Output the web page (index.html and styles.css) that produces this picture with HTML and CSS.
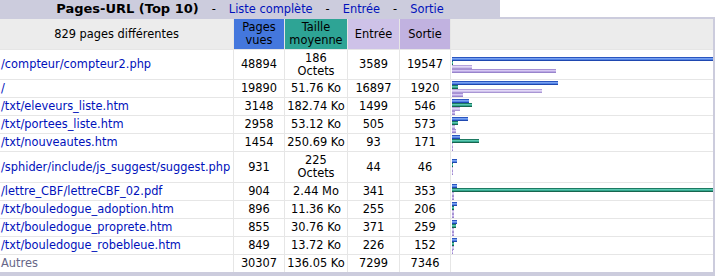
FILE: index.html
```html
<!DOCTYPE html>
<html lang="fr">
<head>
<meta charset="utf-8">
<title>Pages-URL (Top 10)</title>
<link rel="stylesheet" href="styles.css">
</head>
<body>
<div class="report">
  <div class="titlebar">
    <div class="title"><b>Pages-URL (Top 10)</b><span class="sep">-</span><a href="#">Liste complète</a><span class="sep">-</span><a href="#">Entrée</a><span class="sep">-</span><a href="#">Sortie</a></div>
    <div class="blank"></div>
  </div>
  <div class="frame">
    <div class="grid">
      <div class="h h-first">829 pages différentes</div>
      <div class="h h-p">Pages<br>vues</div>
      <div class="h h-k">Taille<br>moyenne</div>
      <div class="h h-e">Entrée</div>
      <div class="h h-x">Sortie</div>
      <div class="h h-bar"></div>

      <div class="c url"><a href="#">/compteur/compteur2.php</a></div>
      <div class="c">48894</div><div class="c">186<br>Octets</div><div class="c">3589</div><div class="c">19547</div>
      <div class="c bars"><span class="bar bp" style="width:261px"></span><span class="bar bk" style="width:1px"></span><span class="bar be" style="width:20px"></span><span class="bar bx" style="width:104px"></span></div>

      <div class="c url"><a href="#">/</a></div>
      <div class="c">19890</div><div class="c">51.76 Ko</div><div class="c">16897</div><div class="c">1920</div>
      <div class="c bars"><span class="bar bp" style="width:106px"></span><span class="bar bk" style="width:6px"></span><span class="bar be" style="width:90px"></span><span class="bar bx" style="width:11px"></span></div>

      <div class="c url"><a href="#">/txt/eleveurs_liste.htm</a></div>
      <div class="c">3148</div><div class="c">182.74 Ko</div><div class="c">1499</div><div class="c">546</div>
      <div class="c bars"><span class="bar bp" style="width:17px"></span><span class="bar bk" style="width:20px"></span><span class="bar be" style="width:8px"></span><span class="bar bx" style="width:3px"></span></div>

      <div class="c url"><a href="#">/txt/portees_liste.htm</a></div>
      <div class="c">2958</div><div class="c">53.12 Ko</div><div class="c">505</div><div class="c">573</div>
      <div class="c bars"><span class="bar bp" style="width:16px"></span><span class="bar bk" style="width:6px"></span><span class="bar be" style="width:3px"></span><span class="bar bx" style="width:4px"></span></div>

      <div class="c url"><a href="#">/txt/nouveautes.htm</a></div>
      <div class="c">1454</div><div class="c">250.69 Ko</div><div class="c">93</div><div class="c">171</div>
      <div class="c bars"><span class="bar bp" style="width:8px"></span><span class="bar bk" style="width:27px"></span><span class="bar be" style="width:1px"></span><span class="bar bx" style="width:1px"></span></div>

      <div class="c url"><a href="#">/sphider/include/js_suggest/suggest.php</a></div>
      <div class="c">931</div><div class="c">225<br>Octets</div><div class="c">44</div><div class="c">46</div>
      <div class="c bars"><span class="bar bp" style="width:5px"></span><span class="bar bk" style="width:1px"></span><span class="bar be" style="width:1px"></span><span class="bar bx" style="width:1px"></span></div>

      <div class="c url"><a href="#">/lettre_CBF/lettreCBF_02.pdf</a></div>
      <div class="c">904</div><div class="c">2.44 Mo</div><div class="c">341</div><div class="c">353</div>
      <div class="c bars"><span class="bar bp" style="width:5px"></span><span class="bar bk" style="width:261px"></span><span class="bar be" style="width:2px"></span><span class="bar bx" style="width:2px"></span></div>

      <div class="c url"><a href="#">/txt/bouledogue_adoption.htm</a></div>
      <div class="c">896</div><div class="c">11.36 Ko</div><div class="c">255</div><div class="c">206</div>
      <div class="c bars"><span class="bar bp" style="width:5px"></span><span class="bar bk" style="width:2px"></span><span class="bar be" style="width:2px"></span><span class="bar bx" style="width:2px"></span></div>

      <div class="c url"><a href="#">/txt/bouledogue_proprete.htm</a></div>
      <div class="c">855</div><div class="c">30.76 Ko</div><div class="c">371</div><div class="c">259</div>
      <div class="c bars"><span class="bar bp" style="width:5px"></span><span class="bar bk" style="width:4px"></span><span class="bar be" style="width:2px"></span><span class="bar bx" style="width:2px"></span></div>

      <div class="c url"><a href="#">/txt/bouledogue_robebleue.htm</a></div>
      <div class="c">849</div><div class="c">13.72 Ko</div><div class="c">226</div><div class="c">152</div>
      <div class="c bars"><span class="bar bp" style="width:5px"></span><span class="bar bk" style="width:2px"></span><span class="bar be" style="width:2px"></span><span class="bar bx" style="width:1px"></span></div>

      <div class="c url other">Autres</div>
      <div class="c">30307</div><div class="c">136.05 Ko</div><div class="c">7299</div><div class="c">7346</div>
      <div class="c bars"></div>
    </div>
  </div>
</div>
</body>
</html>
```

FILE: styles.css
```css
html, body {
  margin: 0;
  padding: 0;
  background: #ffffff;
}

body {
  font-family: "DejaVu Sans", Verdana, sans-serif;
  font-size: 11.4px;
  color: #000000;
}

a {
  color: #0011bb;
  text-decoration: none;
}

.report {
  width: 715px;
}

.titlebar {
  display: flex;
  height: 17px;
}

.title {
  width: 500px;
  background: #ccccdd;
  display: flex;
  align-items: center;
  justify-content: center;
  font-size: 11.4px;
  white-space: nowrap;
}

.title b {
  font-size: 13px;
  font-weight: bold;
}

.title .sep {
  color: #000000;
  padding: 0 13px;
}

.blank {
  flex: 1;
  background: #ffffff;
}

.frame {
  background: #ccccdd;
  padding: 2px 2px 4px 0;
}

.grid {
  display: grid;
  grid-template-columns: 233px 50px 62px 51px 50px 262px;
  grid-template-rows: 30px 29px 17px 17px 17px 17px 30px 17px 17px 17px 17px 17px;
  gap: 1px;
  background: #e6e6e6;
}

.h {
  display: flex;
  align-items: center;
  justify-content: center;
  text-align: center;
  line-height: 13px;
  background: #ececec;
}

.h-p { background: #4477dd; }
.h-k { background: #2ea495; }
.h-e { background: #cec2e8; }
.h-x { background: #c1b2e0; }

.c {
  display: flex;
  align-items: center;
  justify-content: center;
  text-align: center;
  line-height: 13px;
  background: #ffffff;
  white-space: nowrap;
}

.url {
  justify-content: flex-start;
  text-align: left;
  padding-left: 1px;
}

.other {
  color: #666688;
}

.bars {
  flex-direction: column;
  align-items: flex-start;
  justify-content: center;
  padding-left: 1px;
  overflow: hidden;
}

.bar {
  display: block;
  height: 4px;
  flex: none;
}

.bp {
  background: linear-gradient(#2a55c0 0 1px, #7aa2f0 1px 2px, #5585e6 2px 3px, #1f48b0 3px 4px);
}

.bk {
  background: linear-gradient(#1d7a62 0 1px, #5cc8b0 1px 2px, #35a890 2px 3px, #17664f 3px 4px);
}

.be {
  background: linear-gradient(#b4a2dc 0 1px, #e2d8f6 1px 2px, #cfc2ec 2px 3px, #a996d4 3px 4px);
}

.bx {
  background: linear-gradient(#a690d4 0 1px, #d6c8f2 1px 2px, #bba8e4 2px 3px, #9884cc 3px 4px);
}
```
